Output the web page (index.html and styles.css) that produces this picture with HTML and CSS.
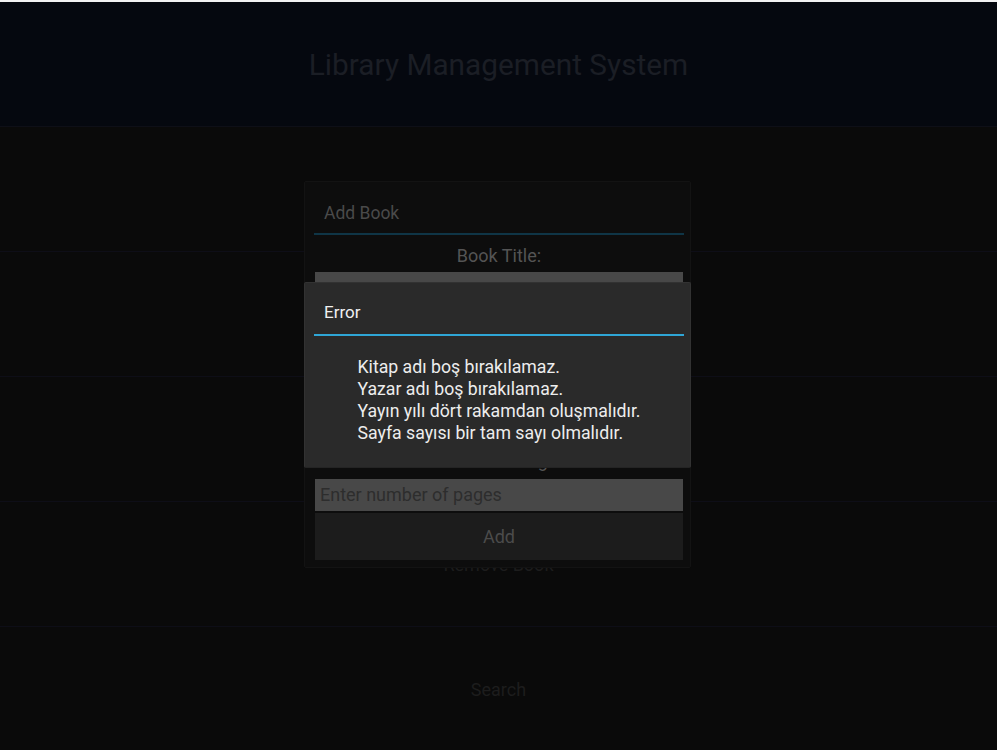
FILE: index.html
```html
<!DOCTYPE html>
<html lang="tr">
<head>
<meta charset="utf-8">
<title>Library Management System</title>
<link rel="stylesheet" href="styles.css">
</head>
<body>
<div class="app">
  <header class="topbar">
    <h1 class="app-title">Library Management System</h1>
  </header>
  <nav class="menu">
    <div class="menu-row"></div>
    <div class="menu-row"></div>
    <div class="menu-row"></div>
    <div class="menu-row">Remove Book</div>
    <div class="menu-row">Search</div>
  </nav>

  <section class="popup popup-add">
    <div class="popup-title">Add Book</div>
    <div class="popup-sep"></div>
    <div class="popup-body">
      <div class="field-label label-first">Book Title:</div>
      <div class="field-input"></div>
      <div class="field-label"></div>
      <div class="field-input"></div>
      <div class="field-label"></div>
      <div class="field-input"></div>
      <div class="field-label label-last">Number of Pages:</div>
      <div class="field-input"><span class="placeholder">Enter number of pages</span></div>
      <div class="add-button">Add</div>
    </div>
  </section>

  <section class="popup popup-error">
    <div class="popup-title">Error</div>
    <div class="popup-sep"></div>
    <div class="error-body">
      <div class="error-text">
        <div>Kitap adı boş bırakılamaz.</div>
        <div>Yazar adı boş bırakılamaz.</div>
        <div>Yayın yılı dört rakamdan oluşmalıdır.</div>
        <div>Sayfa sayısı bir tam sayı olmalıdır.</div>
      </div>
    </div>
  </section>
</div>
</body>
</html>
```

FILE: styles.css
```css
html, body {
  margin: 0;
  padding: 0;
  height: 100%;
  overflow: hidden;
}
body {
  background: #f2f2f2;
  font-family: Roboto, "Noto Sans", "DejaVu Sans", sans-serif;
}
.app {
  position: relative;
  margin-top: 2px;
  height: 750px;
  background: #0a0a0a;
  display: flex;
  flex-direction: column;
}
.topbar {
  height: 125px;
  flex: 0 0 125px;
  background: #05080f;
  display: flex;
  align-items: center;
  justify-content: center;
  border-bottom: 1px solid #0e0f17;
  box-sizing: border-box;
  padding-top: 1px;
}
.app-title {
  margin: 0;
  font-weight: 400;
  font-size: 29.8px;
  color: #1b1e25;
}
.menu {
  display: flex;
  flex-direction: column;
}
.menu-row {
  height: 125px;
  flex: 0 0 125px;
  box-sizing: border-box;
  border-bottom: 1px solid #0e0e17;
  display: flex;
  align-items: center;
  justify-content: center;
  color: #1d1d1d;
  font-size: 18px;
}

/* popups (overlay layer) */
.popup {
  position: absolute;
  left: 304px;
  width: 387px;
  box-sizing: border-box;
  border-radius: 2px;
  display: flex;
  flex-direction: column;
}
.popup-add {
  top: 179px;
  height: 387px;
  background: #0d0d0d;
  border: 1px solid #131313;
}
.popup-error {
  top: 280px;
  height: 186px;
  background: #2a2a2a;
  border: 1px solid #323232;
  border-bottom-color: #242424;
}
.popup-title {
  height: 51px;
  flex: 0 0 51px;
  padding-left: 19px;
  padding-top: 9px;
  display: flex;
  align-items: center;
  font-size: 17px;
  box-sizing: border-box;
}
.popup-add .popup-title { color: #4a4a4a; font-size: 17.5px; padding-top: 10px; }
.popup-error .popup-title { color: #f0f0f0; padding-top: 7px; }
.popup-sep {
  height: 2px;
  flex: 0 0 2px;
  margin: 0 6px 0 9px;
}
.popup-add .popup-sep { background: #0f3546; }
.popup-error .popup-sep { background: #2fa6d6; }

.popup-body {
  display: flex;
  flex-direction: column;
  gap: 2px;
  padding: 2px 7px 0 10px;
}
.field-label {
  height: 33px;
  display: flex;
  align-items: center;
  justify-content: center;
  color: #545454;
  font-size: 18px;
}
.label-first { padding-top: 3px; box-sizing: border-box; }
.field-input {
  height: 32px;
  background: #484848;
  display: flex;
  align-items: center;
  padding-left: 5px;
  font-size: 18px;
}
.placeholder { color: #2d2d2d; position: relative; top: -1px; }
.add-button {
  height: 47px;
  background: #1c1c1c;
  display: flex;
  align-items: center;
  justify-content: center;
  color: #4b4b4b;
  font-size: 18px;
}
.error-body {
  flex: 1;
  display: flex;
  justify-content: center;
  padding-top: 20px;
  padding-left: 3px;
}
.error-text {
  color: #ededed;
  font-size: 17.7px;
  line-height: 22px;
  text-align: left;
}
```
